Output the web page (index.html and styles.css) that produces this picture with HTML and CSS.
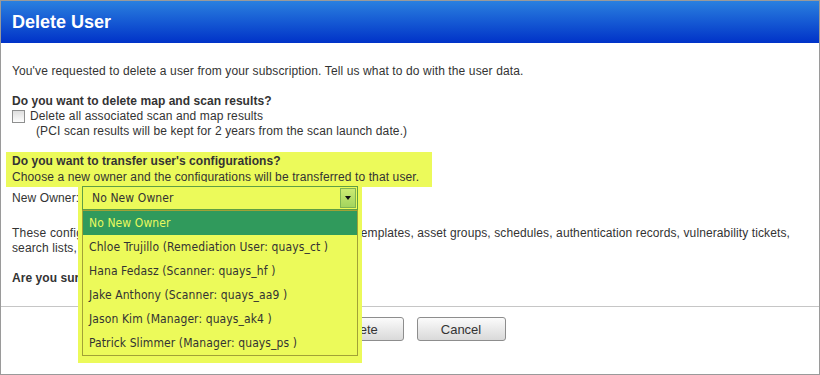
FILE: index.html
```html
<!DOCTYPE html>
<html lang="en">
<head>
   <meta charset="UTF-8">
   <meta name="viewport" content="width=device-width, initial-scale=1.0">
   <title>Delete User</title>
   <link rel="stylesheet" href="styles.css">
</head>
<body>
   <div class="dialog">
      <div class="dialog-header">
         <h1>Delete User</h1>
      </div>
      <div class="dialog-body">
         <p class="intro">You've requested to delete a user from your subscription. Tell us what to do with the user data.</p>

         <h2 class="question">Do you want to delete map and scan results?</h2>
         <label class="check-row"><input type="checkbox" class="check-box"> Delete all associated scan and map results</label>
         <p class="note">(PCI scan results will be kept for 2 years from the scan launch date.)</p>

         <div class="highlight">
            <h2 class="question">Do you want to transfer user's configurations?</h2>
            <p>Choose a new owner and the configurations will be transferred to that user.</p>
         </div>

         <div class="owner-row">
            <span class="owner-label">New Owner:</span>
            <div class="picker">
               <div class="picker-glow"></div>
               <div class="picker-box">
                  <span class="picker-value">No New Owner</span>
                  <span class="picker-arrow"></span>
               </div>
               <ul class="picker-list">
                  <li class="selected">No New Owner</li>
                  <li>Chloe Trujillo (Remediation User: quays_ct )</li>
                  <li>Hana Fedasz (Scanner: quays_hf )</li>
                  <li>Jake Anthony (Scanner: quays_aa9 )</li>
                  <li>Jason Kim (Manager: quays_ak4 )</li>
                  <li>Patrick Slimmer (Manager: quays_ps )</li>
               </ul>
            </div>
         </div>

         <p class="info"><span class="loose">These configurations will be transferred: option profiles, report </span><span class="tight">templates, asset groups, schedules, authentication records, vulnerability tickets,</span> search lists, remediation policies and dashboards.</p>

         <p class="confirm">Are you sure you want to delete this user?</p>
      </div>
      <div class="dialog-footer">
         <button type="button" class="btn">Delete</button>
         <button type="button" class="btn">Cancel</button>
      </div>
   </div>
</body>
</html>
```

FILE: styles.css
```css
body {
   margin: 0;
   padding: 0;
   font-family: 'Liberation Sans', Arial, sans-serif;
   font-size: 12px;
   letter-spacing: 0.12px;
   color: #333;
   background-color: #fff;
}

.dialog {
   width: 820px;
   box-sizing: border-box;
   border: 1px solid #9a9a9a;
}

.dialog-header {
   height: 42px;
   background: linear-gradient(#2a80df, #0032c8);
}

.dialog-header h1 {
   margin: 0;
   padding-left: 11px;
   line-height: 42px;
   font-size: 18px;
   font-weight: bold;
   letter-spacing: 0;
   color: #fff;
}

.dialog-body {
   padding: 21px 12px 20px 11px;
   line-height: 15px;
}

p {
   margin: 0;
}

.question {
   margin: 15px 0 0;
   font-size: 12px;
   font-weight: bold;
   letter-spacing: 0.05px;
   color: #333;
}

.check-row {
   display: flex;
   align-items: center;
   gap: 5px;
}

.check-box {
   appearance: none;
   width: 13px;
   height: 13px;
   margin: 0;
   border: 1px solid #8e8f8f;
   background: linear-gradient(#dedede, #fdfdfd);
   box-sizing: border-box;
}

.note {
   padding-left: 24px;
}

.highlight {
   width: 426px;
   box-sizing: border-box;
   margin: 13px 0 0 -6px;
   padding: 1px 6px 2px;
   line-height: 16px;
   background-color: #ecfa5a;
}

.highlight .question {
   margin: 0;
}

.owner-row {
   display: flex;
   align-items: center;
   margin-top: -1px;
   position: relative;
   z-index: 2;
}

.owner-label {
   width: 70px;
}

.picker {
   position: relative;
   width: 276px;
   font-family: 'DejaVu Sans Condensed', 'DejaVu Sans', sans-serif;
   font-size: 12px;
   letter-spacing: 0.1px;
   color: #333;
}

.picker-glow {
   position: absolute;
   top: -4px;
   left: -4px;
   width: 284px;
   height: 181px;
   background-color: #ecfa5a;
}

.picker-box {
   position: relative;
   display: flex;
   align-items: center;
   height: 24px;
   box-sizing: border-box;
   border: 1px solid #5f9e44;
   background-color: #ecfa5a;
}

.picker-value {
   flex: 1;
   padding-left: 9px;
   padding-top: 1px;
}

.picker-arrow {
   width: 16px;
   height: 20px;
   margin-right: 1px;
   box-sizing: border-box;
   border: 1px solid #7fb452;
   background: linear-gradient(#cbea72, #a3d45e);
   position: relative;
}

.picker-arrow::after {
   content: "";
   position: absolute;
   left: 4px;
   top: 7px;
   border-left: 3.5px solid transparent;
   border-right: 3.5px solid transparent;
   border-top: 4px solid #111;
}

.picker-list {
   position: absolute;
   top: 24px;
   left: 0;
   width: 276px;
   box-sizing: border-box;
   margin: 0;
   padding: 0;
   list-style: none;
   border: 1px solid #a1a136;
   background-color: #ecfa5a;
}

.picker-list li {
   height: 24px;
   line-height: 25px;
   padding-left: 6px;
   white-space: nowrap;
}

.picker-list li.selected {
   background-color: #309a5c;
   color: #e9f95e;
}

.info {
   margin-top: 16px;
}

.info .loose {
   letter-spacing: 0.2px;
}

.info .tight {
   letter-spacing: 0.11px;
}

.confirm {
   margin-top: 15px;
   font-weight: bold;
   letter-spacing: 0.05px;
}

.dialog-footer {
   display: flex;
   justify-content: center;
   gap: 13px;
   padding: 10px 0 33px;
   border-top: 1px solid #c6c6c6;
}

.btn {
   width: 89px;
   height: 24px;
   padding: 0;
   border: 1px solid #8d8d8d;
   border-radius: 3px;
   background: linear-gradient(#fbfbfb, #d9d9d9);
   font-family: 'Liberation Sans', Arial, sans-serif;
   font-size: 13px;
   letter-spacing: 0;
   color: #333;
   cursor: pointer;
}
```
